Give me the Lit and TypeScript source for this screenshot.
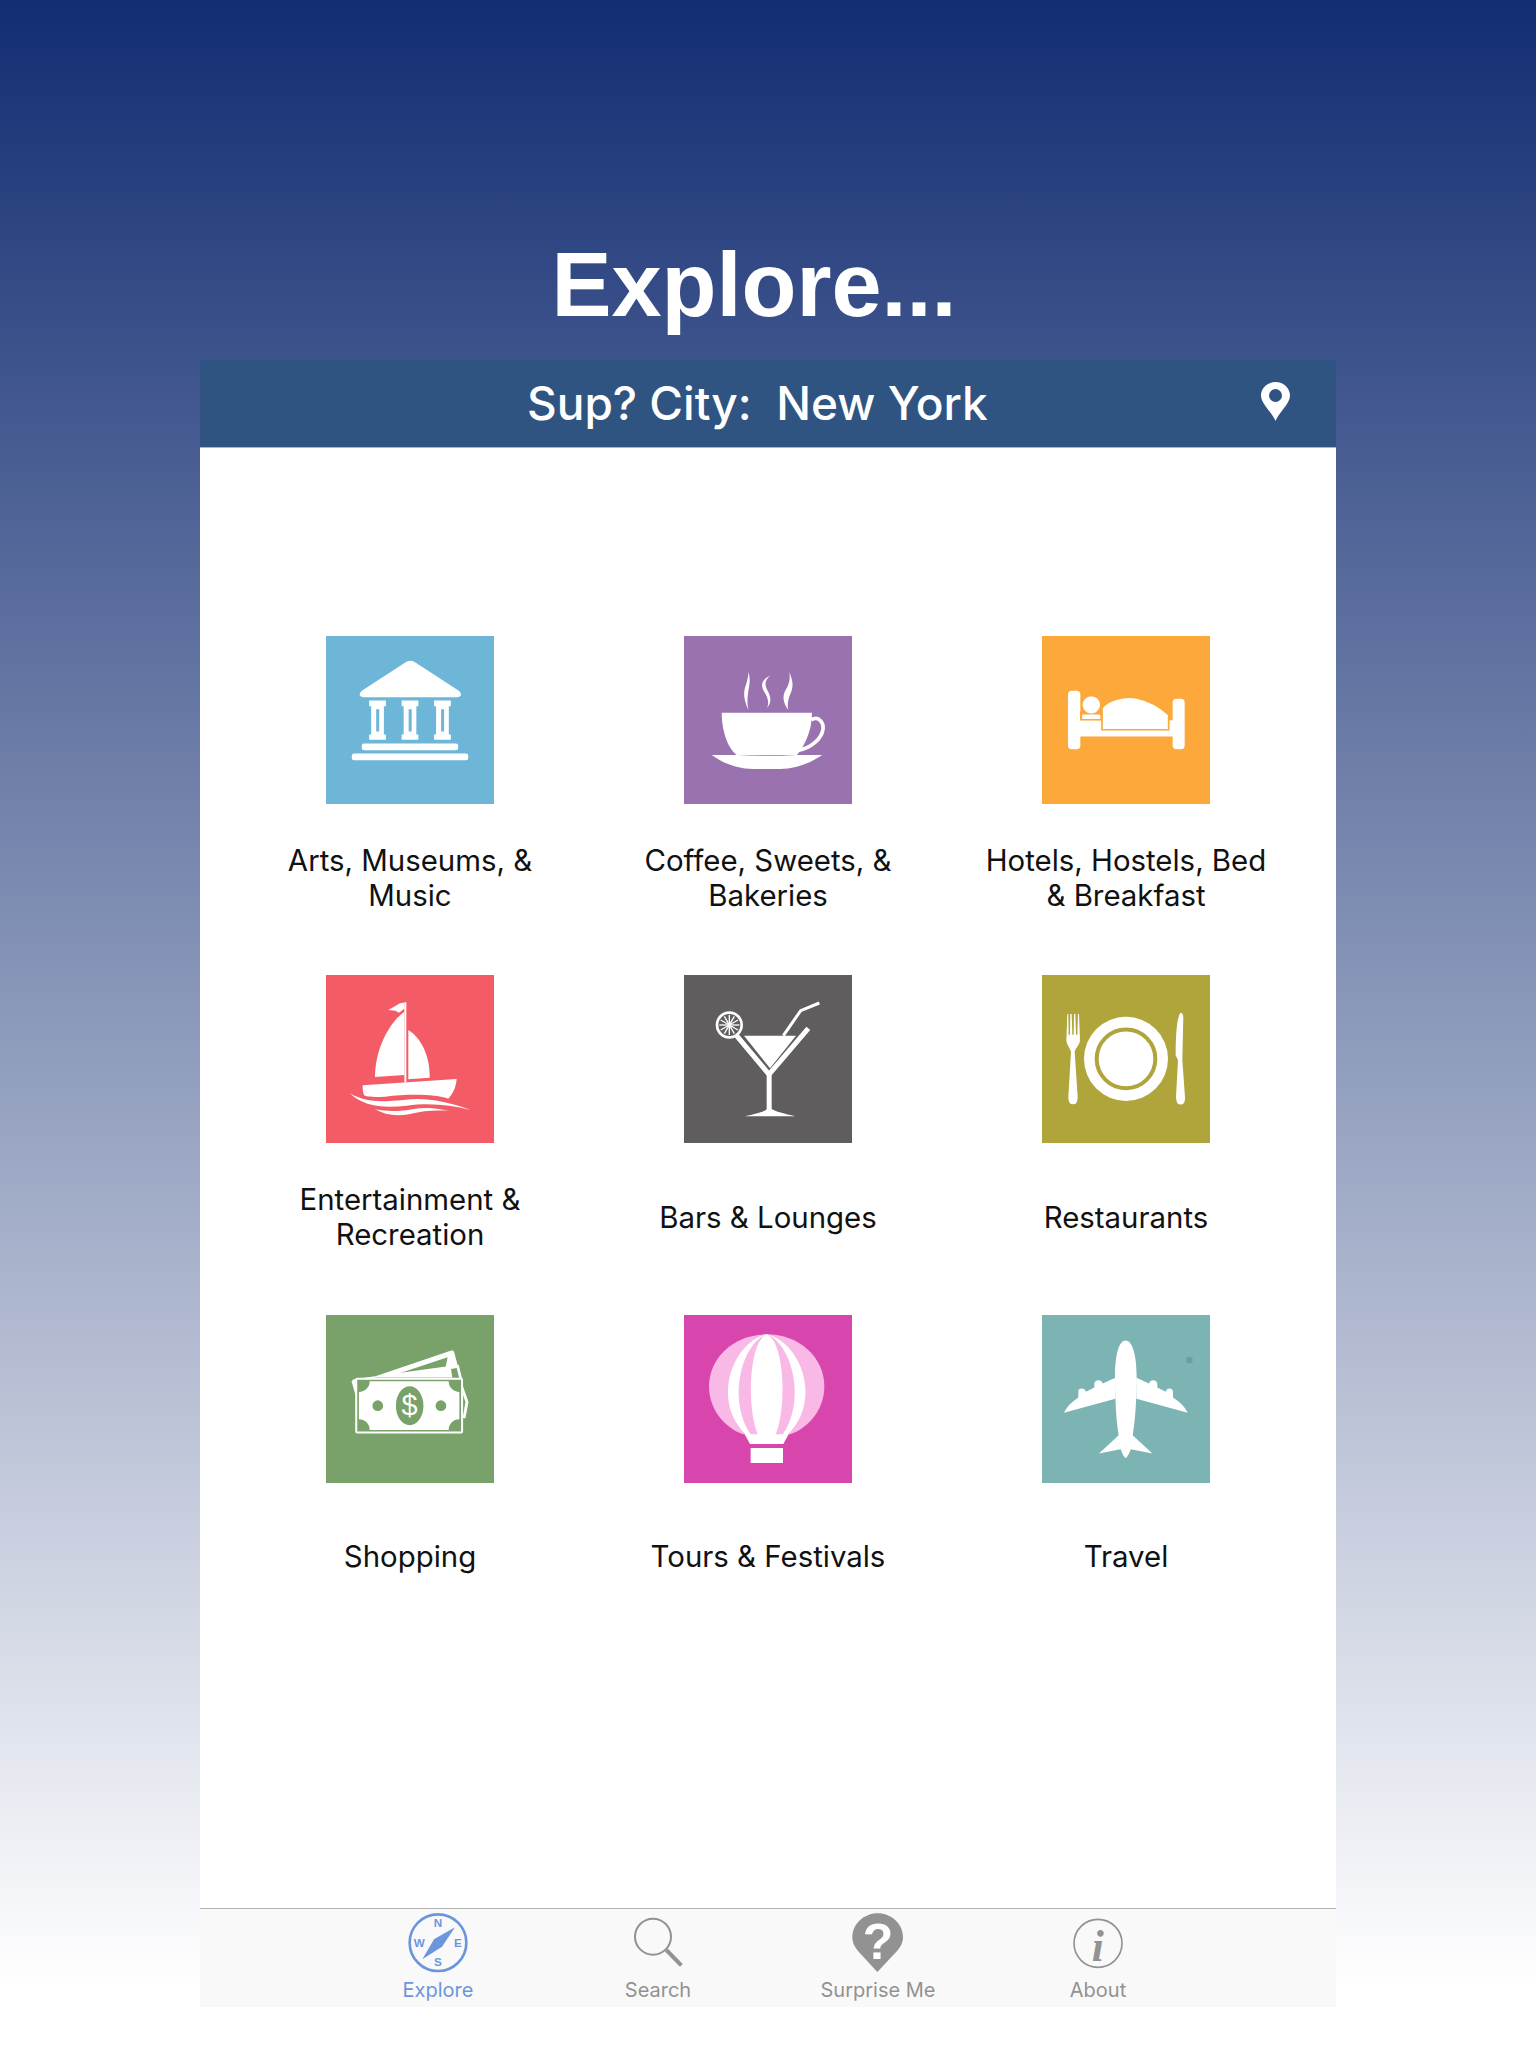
import { LitElement, html, svg, css } from 'lit';
import { customElement } from 'lit/decorators.js';

// icon paths are written in the coordinates of a 3x crop, so each tile has its own viewBox
const W = '#fff';

const museum = svg`
  <path fill=${W} d="M316 126 L184 212 Q170 228 190 230 H470 Q490 228 476 212 L344 126 Q330 118 316 126Z"/>
  ${[207, 304, 401].map(
    (x) => svg`<path fill=${W} fill-rule="evenodd" d="M${x} 240 h50 v17 h-6 v84 h6 v16 h-50 v-16 h6 v-84 h-6z M${x + 21} 266 v66 h9 v-66z"/>`
  )}
  <rect fill=${W} x="185" y="368" width="288" height="20" rx="7"/>
  <rect fill=${W} x="155" y="398" width="348" height="20" rx="7"/>
`;

const coffee = svg`
  <path fill=${W} d="M156 275 H426 C426 305 420 335 406 362 C398 378 390 392 380 402 H202 C172 380 156 325 156 275Z"/>
  <path fill="none" stroke=${W} stroke-width="11" d="M424 296 C445 284 462 302 459 325 C455 352 425 380 384 388"/>
  <path fill=${W} d="M126 401 H202 Q290 408 380 401 H457 C420 425 380 443 330 443 H250 C200 443 160 425 126 401Z"/>
  <path fill=${W} d="M236 153 C248 190 226 215 236 267 C222 235 219 215 229 190 C233 175 236 165 236 153Z"/>
  <path fill=${W} d="M301 163 C268 180 274 200 288 220 C296 235 298 250 290 262 C306 245 303 228 295 212 C285 195 282 180 301 163Z"/>
  <path fill=${W} d="M358 153 C372 185 370 200 360 222 C354 238 352 252 355 266 C340 245 336 225 348 205 C358 190 362 172 358 153Z"/>
`;

const bed = svg`
  <rect fill=${W} x="114" y="211" width="37" height="174" rx="11"/>
  <rect fill=${W} x="428" y="235" width="36" height="150" rx="11"/>
  <rect fill=${W} x="150" y="299" width="280" height="48"/>
  <path fill=${W} stroke="#fca83a" stroke-width="5" d="M216 327 V262 C235 236 285 226 320 232 C358 240 392 260 416 282 V327Z"/>
  <rect fill="#fca83a" x="150" y="272" width="63" height="27"/>
  <circle fill=${W} cx="184" cy="253" r="26"/>
  <rect fill=${W} x="156" y="282" width="55" height="13" rx="3"/>
`;

const boat = svg`
  <path fill=${W} d="M288 127 L270 130 L235 150 L256 152 L267 158 L283 146 V127Z"/>
  <rect fill=${W} x="283" y="127" width="6" height="240"/>
  <path fill=${W} d="M283 155 C235 190 195 270 195 351 L283 345Z"/>
  <path fill=${W} d="M295 210 C335 235 360 290 359 353 L295 358Z"/>
  <path fill=${W} d="M158 376 L440 357 C438 380 430 400 415 416 C380 403 300 400 225 410 C195 412 165 410 162 405 C158 395 158 385 158 376Z"/>
  <path fill=${W} d="M120 400 C170 430 220 425 280 420 C340 412 400 420 482 450 C420 435 360 428 290 437 C220 445 160 440 120 400Z"/>
  <path fill=${W} d="M195 448 C230 455 270 455 310 447 C350 440 390 445 418 453 C380 450 340 452 300 462 C260 470 225 465 195 448Z"/>
`;

const cocktail = svg`
  <path fill="none" stroke=${W} stroke-width="15" d="M187 212 L297 343 L415 205"/>
  <path fill=${W} d="M222 227 H378 L300 325Z"/>
  <path fill="none" stroke=${W} stroke-width="9" d="M340 227 L392 152 L448 129"/>
  <rect fill=${W} x="290" y="345" width="15" height="105"/>
  <path fill=${W} d="M225 469 C260 460 285 455 292 446 H304 C315 455 345 460 376 469Z"/>
  <circle fill="#5f5d5e" stroke=${W} stroke-width="8" cx="178" cy="195" r="37"/>
  ${[0, 30, 60, 90, 120, 150].map(
    (a) => svg`<line stroke=${W} stroke-width="4" x1="178" y1="165" x2="178" y2="225" transform="rotate(${a} 178 195)"/>`
  )}
`;

const plate = svg`
  <circle fill=${W} cx="288" cy="296" r="126"/>
  <circle fill="none" stroke="#afa53a" stroke-width="12" cx="288" cy="296" r="88"/>
  <path fill=${W} d="M112 162 L109 240 C110 255 120 262 123 275 L115 410 Q115 432 129 432 Q143 432 143 410 L134 275 C137 262 149 255 150 240 L147 162 H144 L142 224 H138 L136 162 H132 L131 224 H127 L125 162 H121 L120 224 H116 L115 162Z"/>
  <path fill=${W} d="M452 158 C440 170 437 230 437 285 L444 300 L438 410 Q438 433 452 433 Q466 433 465 410 L457 300 L460 170 Q458 158 452 158Z"/>
`;

const money = svg`
  <path fill=${W} d="M195 228 L423 151 L429 155 L440 196 L404 201 L410 172 L240 228Z"/>
  <path fill=${W} d="M124 243 L130 237 L443 194 L453 236 L445 236 L437 204 L420 207 L424 232 L200 232 L136 241 L144 292 L138 292Z"/>
  <path fill=${W} d="M448 236 L472 305 L463 354 L455 352 L463 305 L448 262Z"/>
  <rect fill="#78a269" stroke=${W} stroke-width="6" x="138" y="236" width="315" height="160" rx="3"/>
  <path fill=${W} d="M178 243 H413 A32 32 0 0 0 445 275 V356 A32 32 0 0 0 413 388 H178 A32 32 0 0 0 146 356 V275 A32 32 0 0 0 178 243Z"/>
  <ellipse fill="#78a269" cx="297" cy="316" rx="41" ry="58"/>
  <circle fill="#78a269" cx="202" cy="316" r="16"/>
  <circle fill="#78a269" cx="390" cy="316" r="16"/>
  <text fill=${W} x="297" y="345" font-size="86" text-anchor="middle" font-family="Liberation Sans, sans-serif">$</text>
`;

const balloon = svg`
  <path fill="#f9b9e6" d="M290 103 C385 103 463 170 463 260 C463 335 405 392 352 405 H228 C175 392 117 335 117 260 C117 170 195 103 290 103Z"/>
  <path fill=${W} d="M290 103 C190 125 120 300 228 405 H352 C460 300 390 125 290 103Z"/>
  <path fill="#f9b9e6" d="M290 103 C215 130 170 300 243 405 H337 C410 300 365 130 290 103Z"/>
  <path fill=${W} d="M290 103 C235 125 230 330 264 405 H316 C350 330 345 125 290 103Z"/>
  <path fill=${W} d="M224 403 H356 L340 432 H240Z"/>
  <rect fill=${W} x="242" y="444" width="97" height="45"/>
`;

const plane = svg`
  <circle fill="#5f9a9c" opacity="0.7" cx="478" cy="180" r="10"/>
  <path fill=${W} d="M287 121 C268 121 255 160 255 230 C255 290 258 360 266 405 L207 460 L272 447 C277 460 283 473 287 473 C291 473 298 460 302 447 L367 460 L308 405 C316 360 320 290 320 230 C320 160 306 121 287 121Z"/>
  <path fill=${W} d="M256 233 L218 250 Q215 240 205 240 Q195 240 193 250 V262 L168 275 Q165 265 155 265 Q145 265 145 275 V292 C125 305 110 320 102 338 L256 296Z"/>
  <path fill=${W} d="M319 233 L357 250 Q360 240 370 240 Q380 240 382 250 V262 L407 275 Q410 265 418 265 Q428 265 429 275 V292 C450 305 465 320 473 338 L319 296Z"/>
`;

const categories = [
  { label: 'Arts, Museums, & Music', color: '#6db6d8', box: '78 48 502 500', icon: museum },
  { label: 'Coffee, Sweets, & Bakeries', color: '#9a72b0', box: '43 45 503 503', icon: coffee },
  { label: 'Hotels, Hostels, Bed & Breakfast', color: '#fca83a', box: '36 48 504 500', icon: bed },
  { label: 'Entertainment & Recreation', color: '#f35b66', box: '48 45 504 504', icon: boat },
  { label: 'Bars & Lounges', color: '#5f5d5e', box: '42 45 504 504', icon: cocktail },
  { label: 'Restaurants', color: '#afa53a', box: '36 45 504 503', icon: plate },
  { label: 'Shopping', color: '#78a269', box: '48 46 500 500', icon: money },
  { label: 'Tours & Festivals', color: '#d846ad', box: '42 45 504 504', icon: balloon },
  { label: 'Travel', color: '#7cb3b3', box: '36 45 504 503', icon: plane },
];

const BLUE = '#6c96dc';
const GREY = '#929292';

const tabIcons = {
  explore: svg`
    <circle fill="none" stroke=${BLUE} stroke-width="8" cx="234" cy="128" r="85"/>
    <path fill=${BLUE} d="M285 82 L246 140 L187 178 L222 118Z"/>
    <g fill=${BLUE} font-size="35" font-weight="700" text-anchor="middle" font-family="Liberation Sans, sans-serif">
      <text x="234" y="82">N</text>
      <text x="178" y="142">W</text>
      <text x="294" y="142">E</text>
      <text x="234" y="199">S</text>
    </g>`,
  search: svg`
    <circle fill="none" stroke=${GREY} stroke-width="6" cx="876" cy="110" r="54"/>
    <path fill="none" stroke=${GREY} stroke-width="12" d="M916 150 L961 196"/>`,
  surprise: svg`
    <path fill=${GREY} d="M288 216 L232 155 C218 140 213 125 213 112 C213 72 248 40 289 40 C331 40 365 72 365 112 C365 125 360 140 345 155Z"/>
    <text fill="#fff" x="290" y="178" font-size="150" font-weight="700" text-anchor="middle" font-family="Liberation Sans, sans-serif">?</text>`,
  about: svg`
    <circle fill="none" stroke=${GREY} stroke-width="5" cx="953" cy="130" r="72"/>
    <text fill=${GREY} x="952" y="182" font-size="130" font-weight="700" font-style="italic" text-anchor="middle" font-family="Liberation Serif, serif">i</text>`,
};

const tabs = [
  { label: 'Explore', box: '114 27 240 192', icon: tabIcons.explore, active: true },
  { label: 'Search', box: '771 27 240 192', icon: tabIcons.search, active: false },
  { label: 'Surprise Me', box: '170 27 240 192', icon: tabIcons.surprise, active: false },
  { label: 'About', box: '833 27 240 192', icon: tabIcons.about, active: false },
];

@customElement('app-root')
export class AppRoot extends LitElement {
  static styles = css`
    :host {
      display: flex;
      flex-direction: column;
      height: 2048px;
      background: linear-gradient(#122d72, #fff 97%);
      font-family: 'Inter', 'Liberation Sans', sans-serif;
    }
    h1 {
      margin: 0;
      padding: 235px 28px 25px 0;
      font: 700 90px/100px 'Liberation Sans', sans-serif;
      color: #fff;
      text-align: center;
    }
    .panel {
      display: flex;
      flex-direction: column;
      height: 1647px;
      margin: 0 200px;
      background: #fff;
    }
    .city {
      display: flex;
      align-items: center;
      height: 88px;
      padding: 0 46px 0 327px;
      background: #305481;
      border-bottom: 1px solid #b5b5b5;
      box-sizing: border-box;
      color: #fff;
      font: 500 46px 'Inter', sans-serif;
      white-space: pre;
    }
    .city span {
      margin-top: -2px;
    }
    .city svg {
      margin: -5px 0 0 auto;
    }
    .grid {
      flex: 1;
      display: grid;
      grid-template-columns: repeat(3, 358px);
      grid-auto-rows: 278px;
      row-gap: 61.5px;
      padding: 187.5px 0 0 31px;
    }
    .cell {
      display: flex;
      flex-direction: column;
      align-items: center;
    }
    .tile {
      display: block;
      width: 168px;
      height: 168px;
    }
    .label {
      display: flex;
      align-items: center;
      justify-content: center;
      width: 290px;
      height: 72px;
      margin-top: 38px;
      font-size: 29.4px;
      line-height: 35px;
      color: #111;
      text-align: center;
    }
    .tabs {
      display: flex;
      height: 99px;
      padding: 0 128px;
      background: #f9f9f9;
      border-top: 1px solid #b2b2b2;
      box-sizing: border-box;
    }
    .tab {
      flex: 1;
      display: flex;
      flex-direction: column;
      align-items: center;
      color: #929292;
      font-size: 20px;
      line-height: 24px;
    }
    .tab svg {
      display: block;
      width: 80px;
      height: 64px;
      margin-bottom: 5px;
    }
    .tab.active {
      color: #6c96dc;
    }
  `;

  render() {
    return html`
      <h1>Explore...</h1>
      <div class="panel">
        <div class="city">
          <span>Sup? City:  New York</span>
          <svg width="29" height="39" viewBox="0 0 29 39">
            <path fill="#fff" fill-rule="evenodd" d="M14.5 39 C11 30 0 22 0 13.5 C0 6 6.5 0 14.5 0 C22.5 0 29 6 29 13.5 C29 22 18 30 14.5 39Z M14.5 7 A6.5 6.5 0 1 0 14.5 20 A6.5 6.5 0 1 0 14.5 7Z"/>
          </svg>
        </div>
        <div class="grid">
          ${categories.map(
            (c) => html`
              <div class="cell">
                <svg class="tile" viewBox=${c.box} preserveAspectRatio="none" style="background:${c.color}">${c.icon}</svg>
                <div class="label">${c.label}</div>
              </div>
            `
          )}
        </div>
        <div class="tabs">
          ${tabs.map(
            (t) => html`
              <div class="tab ${t.active ? 'active' : ''}">
                <svg viewBox=${t.box}>${t.icon}</svg>
                <span>${t.label}</span>
              </div>
            `
          )}
        </div>
      </div>
    `;
  }
}
